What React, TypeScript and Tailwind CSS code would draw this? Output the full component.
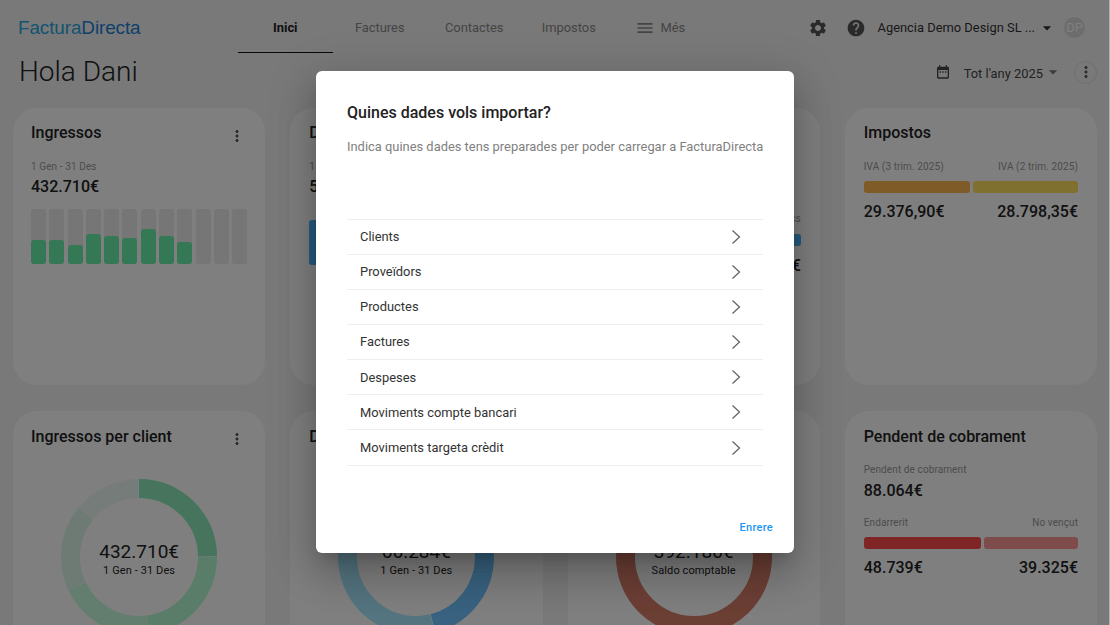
import { MdArrowDropDown, MdDateRange, MdHelp, MdMenu, MdMoreVert, MdSettings } from "react-icons/md";

const importRows = [
  "Clients",
  "Proveïdors",
  "Productes",
  "Factures",
  "Despeses",
  "Moviments compte bancari",
  "Moviments targeta crèdit",
];

const incomeBars = [24, 24, 19, 30, 28, 26, 35, 28, 22, 0, 0, 0];

type Segment = { from: number; to: number; color: string };

// anell de segments, els angles en graus des de dalt
function Donut({ segments, value, label }: { segments: Segment[]; value: string; label: string }) {
  return (
    <div className="relative mx-auto mt-[33px] h-[156px] w-[156px]">
      <svg viewBox="0 0 156 156" className="h-[156px] w-[156px] -rotate-90">
        {segments.map((s) => (
          <circle
            key={s.from}
            cx="78"
            cy="78"
            r="68.5"
            fill="none"
            stroke={s.color}
            strokeWidth="19"
            pathLength={360}
            strokeDasharray={`${s.to - s.from - 0.5} 360`}
            strokeDashoffset={-s.from}
          />
        ))}
      </svg>
      <div className="absolute inset-0 flex flex-col items-center justify-center pt-[2px] text-[#222]">
        <div className="text-[19px] leading-[25px]">{value}</div>
        <div className="text-[11px] leading-[14px] tracking-[0.1px]">{label}</div>
      </div>
    </div>
  );
}

function Bars({ values, color }: { values: number[]; color: string }) {
  return (
    <div className="mt-[12px] flex justify-between">
      {values.map((v, i) => (
        <div key={i} className="flex h-[55px] w-[15px] items-end rounded-[3px] bg-[#ededed]">
          <div className={`w-full rounded-[3px] ${color}`} style={{ height: v }} />
        </div>
      ))}
    </div>
  );
}

function Card({ title, menu, first, low, children }: { title: string; menu?: boolean; first?: boolean; low?: boolean; children: React.ReactNode }) {
  return (
    <div className={`h-[277px] overflow-hidden rounded-[24px] bg-white ${first ? "pl-[18px] pr-[18px]" : "px-[19px]"} ${low ? "pt-[15px]" : "pt-[14px]"}`}>
      <div className={`flex items-center justify-between ${low ? "h-[20px]" : "h-[21px]"}`}>
        <div className="text-[16px] font-medium leading-[21px] text-[#222]">{title}</div>
        {menu && <MdMoreVert className="mr-[1px] mt-[6px] text-[18px] text-[#555]" />}
      </div>
      {children}
    </div>
  );
}

function Caption({ children }: { children: React.ReactNode }) {
  return <div className="text-[10px] leading-[14px] tracking-[0.1px] text-[#999]">{children}</div>;
}

function Amount({ children }: { children: React.ReactNode }) {
  return <div className="text-[16px] font-medium leading-[20px] text-[#222]">{children}</div>;
}

export default function App() {
  return (
    <div className="relative h-screen w-full overflow-hidden bg-[#f3f3f3] font-['Roboto',sans-serif]">
      {/* capçalera */}
      <header className="flex h-[53px] items-center pl-[18px] pr-[25px]">
        <div className="w-[220px] pt-[3px] font-['Liberation_Sans',sans-serif] text-[18.9px] tracking-[-0.1px]">
          <span className="text-[#28a8e0]">Factura</span>
          <span className="text-[#1e80d8]">Directa</span>
        </div>
        <nav className="flex h-[53px] text-[12.9px] text-[#888]">
          <div className="flex w-[94.5px] items-center justify-center border-b-[1.5px] border-[#111] pt-[3px] font-bold text-[#222]">Inici</div>
          <div className="flex w-[94.5px] items-center justify-center pt-[2px]">Factures</div>
          <div className="flex w-[94.5px] items-center justify-center pt-[2px]">Contactes</div>
          <div className="flex w-[94.5px] items-center justify-center pt-[2px]">Impostos</div>
          <div className="flex w-[94.5px] items-center justify-center gap-[5px] pr-[6px] pt-[2px]">
            <MdMenu className="text-[20px]" />
            Més
          </div>
        </nav>
        <div className="ml-auto flex items-center pt-[2px] text-[#333]">
          <MdSettings className="text-[20px] text-[#555]" />
          <MdHelp className="ml-[18px] text-[20px] text-[#555]" />
          <span className="ml-[12px] text-[12.9px]">Agencia Demo Design SL ...</span>
          <MdArrowDropDown className="ml-[2px] text-[20px]" />
          <div className="ml-[7px] flex h-[21px] w-[21px] items-center justify-center rounded-full bg-[#dadada] text-[13px] text-white">DP</div>
        </div>
      </header>

      {/* títol i filtre */}
      <div className="flex h-[55px] items-start pl-[19px] pr-[13px]">
        <h1 className="pt-[1px] text-[28px] font-light leading-[36px] text-[#222]">Hola Dani</h1>
        <div className="ml-auto flex h-[38px] items-center text-[#444]">
          <MdDateRange className="text-[16px]" />
          <span className="ml-[13px] pt-[3px] text-[12.9px]">Tot l'any 2025</span>
          <MdArrowDropDown className="text-[20px] text-[#777]" />
          <div className="ml-[11px] flex h-[23px] w-[23px] items-center justify-center rounded-full border border-[#ddd]">
            <MdMoreVert className="text-[18px] text-[#555]" />
          </div>
        </div>
      </div>

      {/* targetes */}
      <div className="grid grid-cols-4 gap-x-[25px] gap-y-[26px] px-[13px]">
        <Card title="Ingressos" menu first>
          <div className="mt-[17px]">
            <Caption>1 Gen - 31 Des</Caption>
          </div>
          <div className="mt-[3px]">
            <Amount>432.710€</Amount>
          </div>
          <Bars values={incomeBars} color="bg-[#69f0aa]" />
        </Card>

        <Card title="Despeses" menu>
          <div className="mt-[17px]">
            <Caption>1 Gen - 31 Des</Caption>
          </div>
          <div className="mt-[3px]">
            <Amount>54.120€</Amount>
          </div>
          <div className="mt-[23px] h-[45px] w-[40px] rounded-[3px] bg-[#4ab4ff]" />
        </Card>

        <Card title="Tresoreria">
          <div className="mt-[69px] text-right">
            <Caption>Saldo pendent de bancs</Caption>
          </div>
          <div className="mt-[8px] h-[12px] rounded-[3px] bg-[#4ab4ff]" />
          <div className="mt-[10px] text-right">
            <Amount>58.210€</Amount>
          </div>
        </Card>

        <Card title="Impostos">
          <div className="mt-[17px] flex justify-between">
            <Caption>IVA (3 trim. 2025)</Caption>
            <Caption>IVA (2 trim. 2025)</Caption>
          </div>
          <div className="mt-[7px] flex gap-[3px]">
            <div className="h-[12px] w-[106px] rounded-[3px] bg-[#ffb84e]" />
            <div className="h-[12px] flex-1 rounded-[3px] bg-[#ffe05e]" />
          </div>
          <div className="mt-[9px] flex justify-between">
            <Amount>29.376,90€</Amount>
            <Amount>28.798,35€</Amount>
          </div>
        </Card>

        <Card title="Ingressos per client" menu first low>
          <Donut
            value="432.710€"
            label="1 Gen - 31 Des"
            segments={[
              { from: 0, to: 90, color: "#8ee8b8" },
              { from: 90, to: 173, color: "#b4fad2" },
              { from: 173, to: 245, color: "#c6fade" },
              { from: 245, to: 310, color: "#dcf6ea" },
              { from: 310, to: 360, color: "#ecf8f2" },
            ]}
          />
        </Card>

        <Card title="Despeses per proveïdor" menu low>
          <Donut
            value="66.284€"
            label="1 Gen - 31 Des"
            segments={[
              { from: 0, to: 166, color: "#70c4ff" },
              { from: 166, to: 360, color: "#a8e8ff" },
            ]}
          />
        </Card>

        <Card title="Bancs" low>
          <Donut
            value="392.180€"
            label="Saldo comptable"
            segments={[{ from: 0, to: 360, color: "#d87e6a" }]}
          />
        </Card>

        <Card title="Pendent de cobrament" low>
          <div className="mt-[17px]">
            <Caption>Pendent de cobrament</Caption>
          </div>
          <div className="mt-[4px]">
            <Amount>88.064€</Amount>
          </div>
          <div className="mt-[15px] flex justify-between">
            <Caption>Endarrerit</Caption>
            <Caption>No vençut</Caption>
          </div>
          <div className="mt-[7px] flex gap-[3px]">
            <div className="h-[12px] w-[117px] rounded-[3px] bg-[#ff4a4a]" />
            <div className="h-[12px] flex-1 rounded-[3px] bg-[#ff9898]" />
          </div>
          <div className="mt-[9px] flex justify-between">
            <Amount>48.739€</Amount>
            <Amount>39.325€</Amount>
          </div>
        </Card>
      </div>

      {/* fons del diàleg */}
      <div className="absolute inset-0 flex items-center justify-center bg-black/50 pb-[1px]">
        <div className="h-[482px] w-[478px] rounded-[6px] bg-white px-[31px] pt-[31px] shadow-[0_11px_15px_-7px_rgba(0,0,0,0.2),0_24px_38px_3px_rgba(0,0,0,0.14),0_9px_46px_8px_rgba(0,0,0,0.12)]">
          <div className="text-[16px] font-medium leading-[22px] text-[#222]">Quines dades vols importar?</div>
          <div className="mt-[13px] whitespace-nowrap text-[12.9px] leading-[20px] text-[#808080]">
            Indica quines dades tens preparades per poder carregar a FacturaDirecta
          </div>
          <div className="mt-[61.6px] border-t border-[#eee]">
            {importRows.map((row) => (
              <div key={row} className="flex h-[35.15px] items-center justify-between border-b border-[#eee] pl-[13px] pr-[22px] text-[12.9px] text-[#333]">
                {row}
                <svg width="10" height="16" viewBox="0 0 10 16" fill="none" stroke="#666" strokeWidth="1.3">
                  <path d="M1.5 1.5 L8.5 8 L1.5 14.5" />
                </svg>
              </div>
            ))}
          </div>
          <div className="mr-[-10px] mt-[54px] text-right text-[11px] font-medium tracking-[0.3px] text-[#2196f3]">Enrere</div>
        </div>
      </div>

      {/* vora clara de la finestra */}
      <div className="absolute right-0 top-0 h-full w-[1px] bg-[#b0b0b0]" />
    </div>
  );
}
